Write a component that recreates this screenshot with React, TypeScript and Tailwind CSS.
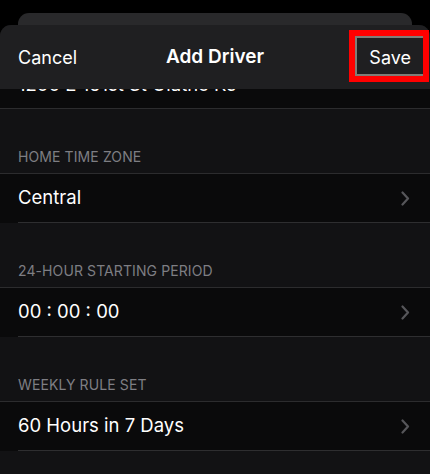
import React from "react";

const Chevron = () => (
  <svg width="9" height="15" viewBox="0 0 9 15" fill="none" className="shrink-0">
    <path d="M1.5 1.5L7 7.5L1.5 13.5" stroke="#56565a" strokeWidth="2.2" strokeLinecap="round" strokeLinejoin="round" />
  </svg>
);

const Section = ({ title, value }: { title: string; value: string }) => (
  <div className="flex flex-col">
    <div className="h-[64px] flex items-end px-[18px] pb-[8px]">
      <span className="text-[14px] leading-[16px] tracking-[0.1px] text-[#7e7e83]">{title}</span>
    </div>
    <div className="h-px bg-[#2c2c2e]" />
    <div className="h-[48px] bg-[#0a0a0b] flex items-center justify-between pl-[18px] pr-[20px]">
      <span className="text-[18.5px] text-white">{value}</span>
      <Chevron />
    </div>
    <div className="h-px bg-[#0a0a0b] flex">
      <div className="w-[18px]" />
      <div className="flex-1 bg-[#2e2e30]" />
    </div>
  </div>
);

export default function App() {
  return (
    <div
      className="relative w-[430px] h-[474px] bg-black overflow-hidden pt-[13px] flex flex-col"
      style={{ fontFamily: "Inter, 'Noto Sans', sans-serif" }}
    >
      <div className="mx-[18px] h-[14px] rounded-t-[11px] bg-[#29292b] shrink-0" />
      <div className="-mt-[2px] flex-1 flex flex-col rounded-t-[11px] overflow-hidden bg-[#121214]">
        <div className="relative z-10 h-[64px] bg-[#1f1f21] flex items-center justify-between px-[18px] shrink-0">
          <span className="text-[18px] text-white">Cancel</span>
          <span className="absolute left-0 right-0 text-center text-[19px] font-semibold text-white pointer-events-none">
            Add Driver
          </span>
          <span className="text-[18px] text-white mr-[1px]">Save</span>
        </div>
        <div className="-mt-[28px] h-[47px] bg-[#0a0a0b] flex items-center px-[18px] shrink-0">
          <span className="text-[18.5px] text-white">1200 E 151st St Olathe Ks</span>
        </div>
        <div className="h-px bg-[#2c2c2e] shrink-0" />
        <Section title="HOME TIME ZONE" value="Central" />
        <Section title="24-HOUR STARTING PERIOD" value="00 : 00 : 00" />
        <Section title="WEEKLY RULE SET" value="60 Hours in 7 Days" />
      </div>
      <div className="absolute z-20 left-[349px] top-[30px] w-[80px] h-[52px] border-[6px] border-[#ff0000]">
        <div className="w-full h-full border-2 border-r-0 border-[#7f7d78]" />
      </div>
    </div>
  );
}
